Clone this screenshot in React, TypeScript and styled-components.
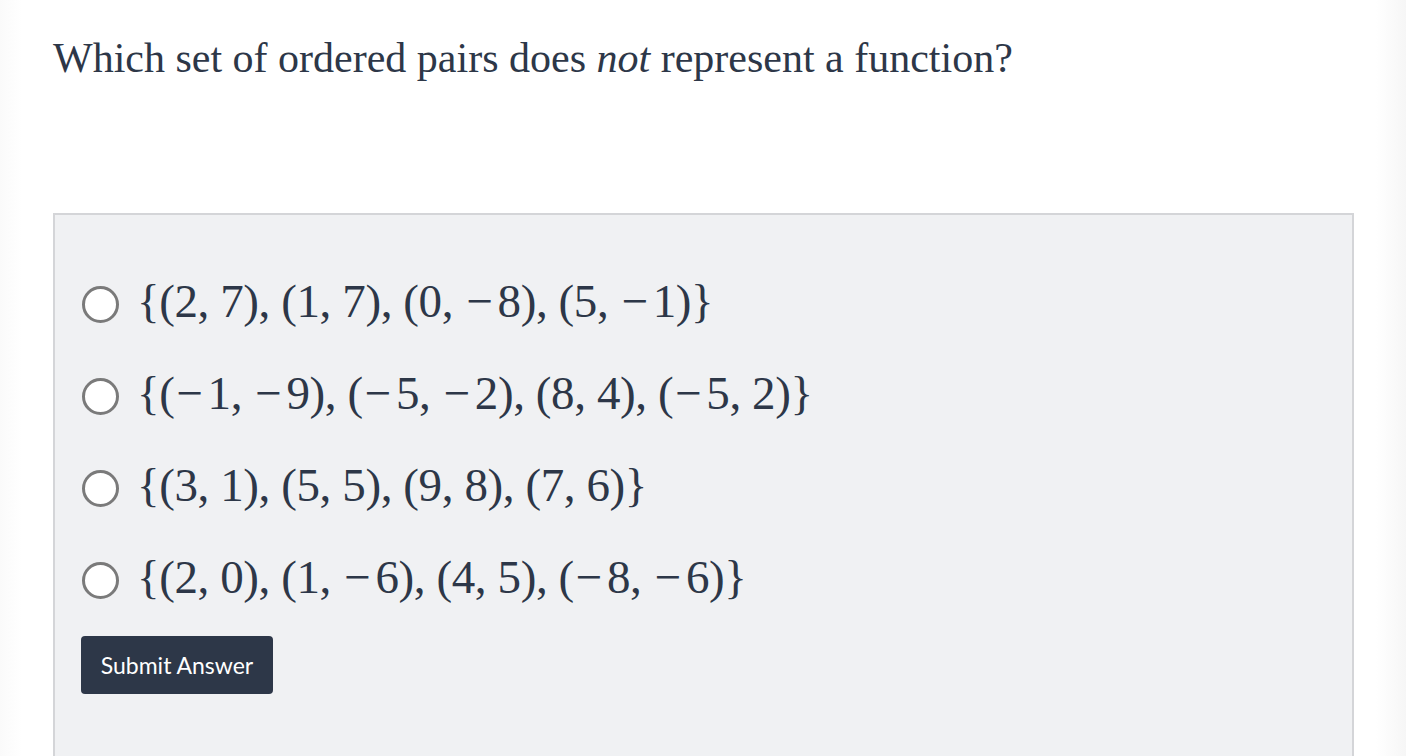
import { useState } from "react";
import styled, { createGlobalStyle } from "styled-components";

const GlobalStyle = createGlobalStyle`
	html, body {
		margin: 0;
		padding: 0;
		background: #ffffff;
	}
`;

// === page ===
const Page = styled.div`
	min-height: 756px;
	background: linear-gradient(
		to right,
		#fafafa 0,
		#ffffff 22px,
		#ffffff calc(100% - 30px),
		#f6f6f6 100%
	);
	padding: 30px 30px 0 53px;
	box-sizing: border-box;
	overflow: hidden;
`;

const Question = styled.h1`
	margin: 0;
	font-family: "Liberation Serif", Georgia, serif;
	font-weight: normal;
	font-size: 42px;
	line-height: 56px;
	color: #2d3748;
`;

const ChoicesCard = styled.div`
	margin-top: 127px;
	width: 1301px;
	height: 560px;
	box-sizing: border-box;
	background: #f0f1f3;
	border: 2px solid #d4d5d8;
	padding: 43px 28px 0 27px;
`;

const ChoiceList = styled.div`
	display: flex;
	flex-direction: column;
`;

const ChoiceRow = styled.label`
	display: flex;
	align-items: center;
	height: 92px;
	gap: 18px;
	cursor: pointer;
`;

const Radio = styled.span<{ $checked: boolean }>`
	width: 37px;
	height: 37px;
	box-sizing: border-box;
	border-radius: 50%;
	border: 3px solid #7a7a7a;
	background: ${(p) =>
		p.$checked
			? "radial-gradient(circle, #2d3748 0 7px, #fff 8px)"
			: "#ffffff"};
	flex-shrink: 0;
`;

const MathText = styled.span`
	font-family: "Liberation Serif", "DejaVu Serif", serif;
	font-size: 47px;
	color: #2d3748;
	line-height: 1;
	white-space: nowrap;
	letter-spacing: -0.4px;
	position: relative;
	top: -3px;
`;

const Minus = styled.span`
	margin: 0 5px 0 2px;
`;

const SubmitButton = styled.button`
	margin-top: 10px;
	margin-left: -1px;
	width: 192px;
	height: 58px;
	background: #2d3748;
	color: #ffffff;
	border: none;
	border-radius: 4px;
	font-family: Lato, "Open Sans", sans-serif;
	font-size: 23px;
	cursor: pointer;
`;

const choices = [
	"{(2, 7), (1, 7), (0, −8), (5, −1)}",
	"{(−1, −9), (−5, −2), (8, 4), (−5, 2)}",
	"{(3, 1), (5, 5), (9, 8), (7, 6)}",
	"{(2, 0), (1, −6), (4, 5), (−8, −6)}",
];

function renderMath(expr: string) {
	const parts = expr.split("−");
	return parts.map((part, i) => (
		<span key={i}>
			{i > 0 && <Minus>−</Minus>}
			{part}
		</span>
	));
}

export default function App() {
	const [selected, setSelected] = useState<number | null>(null);

	return (
		<>
			<GlobalStyle />
			<Page>
				<Question>
					Which set of ordered pairs does <em>not</em> represent a
					function?
				</Question>
				<ChoicesCard>
					<ChoiceList>
						{choices.map((c, i) => (
							<ChoiceRow key={i} onClick={() => setSelected(i)}>
								<Radio $checked={selected === i} />
								<MathText>{renderMath(c)}</MathText>
							</ChoiceRow>
						))}
					</ChoiceList>
					<SubmitButton>Submit Answer</SubmitButton>
				</ChoicesCard>
			</Page>
		</>
	);
}
